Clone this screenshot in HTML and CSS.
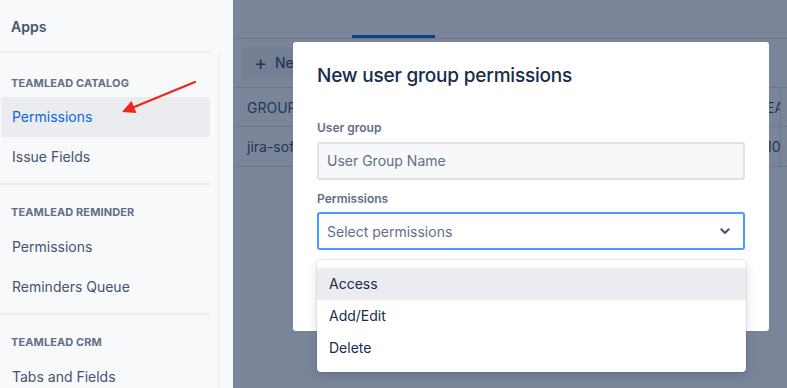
FILE: index.html
```html
<!DOCTYPE html>
<html lang="en">
<head>
  <meta charset="UTF-8">
  <title>Apps - Permissions</title>
  <link rel="stylesheet" href="styles.css">
</head>
<body>
  <div class="wrapper">
    <div class="sidebar">
      <div class="apps-title">Apps</div>
      <div class="side-body">
        <div class="group">
          <div class="group-title">TEAMLEAD CATALOG</div>
          <div class="nav-item active">Permissions</div>
          <div class="nav-item">Issue Fields</div>
        </div>
        <div class="group">
          <div class="group-title">TEAMLEAD REMINDER</div>
          <div class="nav-item">Permissions</div>
          <div class="nav-item">Reminders Queue</div>
        </div>
        <div class="group">
          <div class="group-title">TEAMLEAD CRM</div>
          <div class="nav-item">Tabs and Fields</div>
        </div>
      </div>
      <svg class="pointer" width="90" height="50" viewBox="0 0 90 50">
        <line x1="77" y1="4" x2="15" y2="29.5" stroke="#f0241c" stroke-width="2.2" stroke-linecap="round"/>
        <polygon points="4,34 13.5,23 18.5,35" fill="#f0241c"/>
      </svg>
    </div>

    <div class="main">
      <div class="page">
        <div class="tabs">
          <div class="tab"></div>
        </div>
        <div class="toolbar">
          <button class="new-btn"><span class="plus">+</span> New</button>
        </div>
        <div class="table">
          <div class="row head">
            <div class="cell">GROUP</div>
            <div class="cell right">EAM</div>
          </div>
          <div class="row">
            <div class="cell">jira-software-users</div>
            <div class="cell right">10</div>
          </div>
        </div>
      </div>

      <div class="overlay"></div>

      <div class="modal">
        <h1>New user group permissions</h1>
        <label class="field-label">User group</label>
        <div class="input">User Group Name</div>
        <label class="field-label tight">Permissions</label>
        <div class="select-wrap">
          <div class="select">
            <span>Select permissions</span>
            <svg width="24" height="24" viewBox="0 0 24 24">
              <path d="M8.3 10.3 12 14l3.7-3.7" fill="none" stroke="#44546f" stroke-width="2" stroke-linecap="round" stroke-linejoin="round"/>
            </svg>
          </div>
          <div class="menu">
            <div class="option hover">Access</div>
            <div class="option">Add/Edit</div>
            <div class="option">Delete</div>
          </div>
        </div>
      </div>
    </div>
  </div>
</body>
</html>
```

FILE: styles.css
```css
* {
  margin: 0;
  padding: 0;
  box-sizing: border-box;
  font-family: Inter, 'Noto Sans', sans-serif;
}

html, body {
  width: 100%;
  height: 100%;
  overflow: hidden;
  background: #fff;
}

.wrapper {
  display: flex;
  height: 100vh;
}

.sidebar {
  width: 233px;
  background: #f8f9fb;
  position: relative;
  flex-shrink: 0;
  overflow: hidden;
}

.apps-title {
  height: 53px;
  padding: 18px 11px 0;
  font-size: 14px;
  font-weight: 600;
  color: #44546f;
  border-bottom: 2px solid #ebecf0;
  width: 210px;
}

.side-body {
  width: 219px;
  border-right: 1px solid #ebecf0;
  height: calc(100% - 53px);
  padding-top: 14px;
}

.group {
  width: 210px;
  border-bottom: 2px solid #ebecf0;
  padding-bottom: 6px;
  margin-bottom: 11px;
}

.group-title {
  font-size: 11px;
  font-weight: 700;
  color: #626f86;
  padding: 9px 11px 0;
  height: 30px;
  letter-spacing: 0.1px;
}

.group + .group .group-title {
  height: 31px;
}

.nav-item {
  height: 40px;
  line-height: 40px;
  padding-left: 11px;
  margin-left: 1px;
  font-size: 14px;
  color: #44546f;
  border-radius: 3px;
}

.nav-item.active {
  background: #ebecf0;
  color: #0c66e4;
}

.pointer {
  position: absolute;
  left: 118px;
  top: 78px;
}

.main {
  flex: 1;
  position: relative;
  overflow: hidden;
}

.tabs {
  height: 39px;
  border-bottom: 1px solid #dfe1e6;
  padding-left: 119px;
  display: flex;
  align-items: flex-end;
}

.tab {
  width: 83px;
  height: 3px;
  background: #0c66e4;
}

.toolbar {
  padding: 8px 9px;
}

.new-btn {
  height: 32px;
  padding: 0 12px;
  border: none;
  border-radius: 3px;
  background: #f1f2f4;
  color: #44546f;
  font-size: 14px;
  font-weight: 500;
}

.plus {
  font-size: 20px;
  font-weight: 400;
  vertical-align: -2px;
  margin-right: 4px;
}

.row {
  display: flex;
  justify-content: space-between;
  height: 40px;
  border-bottom: 1px solid #dfe1e6;
}

.row.head {
  border-top: 1px solid #dfe1e6;
}

.cell {
  padding: 0 14px;
  line-height: 40px;
  font-size: 14px;
  color: #44546f;
  white-space: nowrap;
}

.cell.right {
  padding-left: 11px;
  padding-right: 0;
  width: 26px;
  border-right: 1px solid #dfe1e6;
  overflow: hidden;
  margin-right: 6px;
}

.overlay {
  position: absolute;
  inset: 0;
  background: rgba(9, 30, 66, 0.54);
}

.modal {
  position: absolute;
  left: 60px;
  top: 42px;
  width: 476px;
  height: 289px;
  background: #fff;
  border-radius: 3px;
  padding: 22px 24px 0;
}

.modal h1 {
  font-size: 19px;
  font-weight: 500;
  color: #172b4d;
  line-height: 24px;
  margin-bottom: 32px;
  letter-spacing: -0.2px;
}

.field-label {
  display: block;
  font-size: 12px;
  font-weight: 600;
  color: #626f86;
  line-height: 16px;
  margin-bottom: 6px;
}

.field-label.tight {
  margin-bottom: 5px;
}

.input {
  height: 38px;
  background: #f7f8f9;
  border: 2px solid #dfe1e6;
  border-radius: 3px;
  padding: 0 8px;
  line-height: 34px;
  font-size: 14px;
  color: #626f86;
  margin-bottom: 11px;
}

.select-wrap {
  position: relative;
}

.select {
  height: 38px;
  border: 2px solid #4c9aff;
  border-radius: 3px;
  padding: 0 6px 0 8px;
  display: flex;
  align-items: center;
  justify-content: space-between;
  font-size: 14px;
  color: #626f86;
}

.menu {
  position: absolute;
  left: 0;
  top: 48px;
  width: 429px;
  background: #fff;
  border-radius: 4px;
  padding: 8px 0;
  box-shadow: 0 0 0 1px rgba(9, 30, 66, 0.08), 0 4px 11px rgba(9, 30, 66, 0.15);
}

.option {
  height: 32px;
  line-height: 32px;
  padding-left: 12px;
  font-size: 14px;
  color: #172b4d;
}

.option.hover {
  background: #ebecf0;
}
```
